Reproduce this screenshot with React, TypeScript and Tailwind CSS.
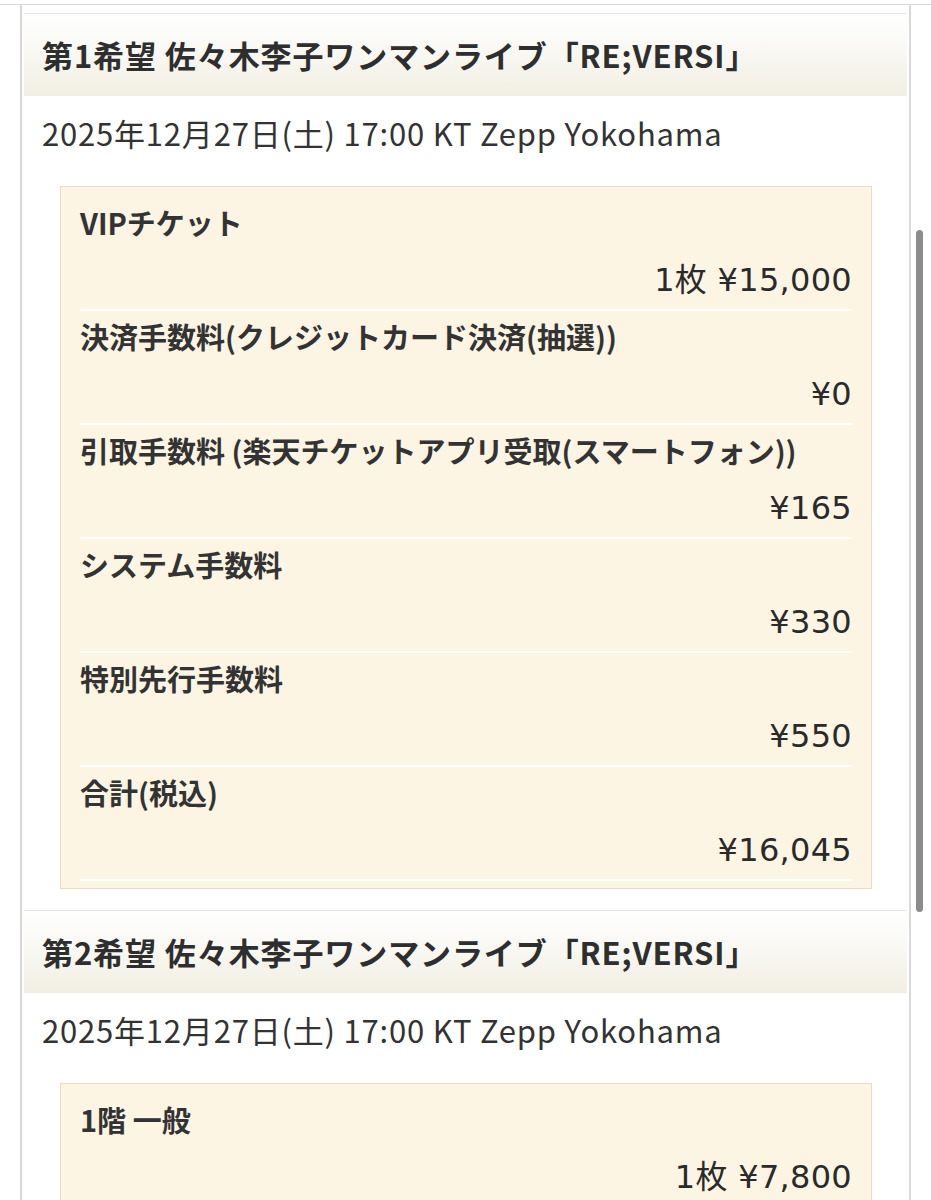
import React from "react";

type Line = { label: string; value: string };

const first: Line[] = [
  { label: "VIPチケット", value: "1枚 ¥15,000" },
  { label: "決済手数料(クレジットカード決済(抽選))", value: "¥0" },
  { label: "引取手数料 (楽天チケットアプリ受取(スマートフォン))", value: "¥165" },
  { label: "システム手数料", value: "¥330" },
  { label: "特別先行手数料", value: "¥550" },
  { label: "合計(税込)", value: "¥16,045" },
];

const second: Line[] = [
  { label: "1階 一般", value: "1枚 ¥7,800" },
  { label: "決済手数料(クレジットカード決済(抽選))", value: "¥0" },
];

function Section({ title, date, lines }: { title: string; date: string; lines: Line[] }) {
  return (
    <section className="border-t border-[#e8e8e8] pb-[21px]">
      <h2 className="h-[82px] flex items-center pl-[18px] bg-gradient-to-b from-white to-[#f1efe3] text-[31px] font-bold text-[#2e2e2e] tracking-[0.9px]">
        {title}
      </h2>
      <p className="pt-[17px] pl-[18px] h-[60px] leading-[40px] text-[31px] text-[#333] tracking-[0.8px]">{date}</p>
      <div className="mt-[30px] mx-[36px] mr-[35px] border border-[#e7dec3] bg-[#fdf5e4] px-[19px] pt-[10px] pb-[7px]">
        {lines.map((l, i) => (
          <div key={i} className="pt-2 pb-2 border-b-2 border-white">
            <div className="h-10 leading-[34px] text-[29px] font-bold text-[#333] whitespace-nowrap">{l.label}</div>
            <div
              className="mt-4 h-10 leading-[39px] text-[32px] text-[#2a2a2a] text-right tracking-[0.3px]"
              style={{ fontFamily: '"DejaVu Sans", "Noto Sans CJK JP", sans-serif' }}
            >
              {l.value}
            </div>
          </div>
        ))}
      </div>
    </section>
  );
}

export default function App() {
  return (
    <div
      className="relative w-[931px] h-[1200px] overflow-hidden bg-white"
      style={{ fontFamily: '"Noto Sans CJK JP", "Noto Sans", sans-serif' }}
    >
      <div className="h-[5px] border-b border-[#dcdcdc]" />
      <div className="mx-[20px] border-x-2 border-[#d9d9d9] px-[2px] pt-[8px] h-[1300px]">
        <Section title="第1希望 佐々木李子ワンマンライブ「RE;VERSI」" date="2025年12月27日(土) 17:00 KT Zepp Yokohama" lines={first} />
        <Section title="第2希望 佐々木李子ワンマンライブ「RE;VERSI」" date="2025年12月27日(土) 17:00 KT Zepp Yokohama" lines={second} />
      </div>
      <div className="absolute left-[916px] top-[230px] w-[7px] h-[682px] rounded-full bg-[#8c8c8c]" />
    </div>
  );
}
